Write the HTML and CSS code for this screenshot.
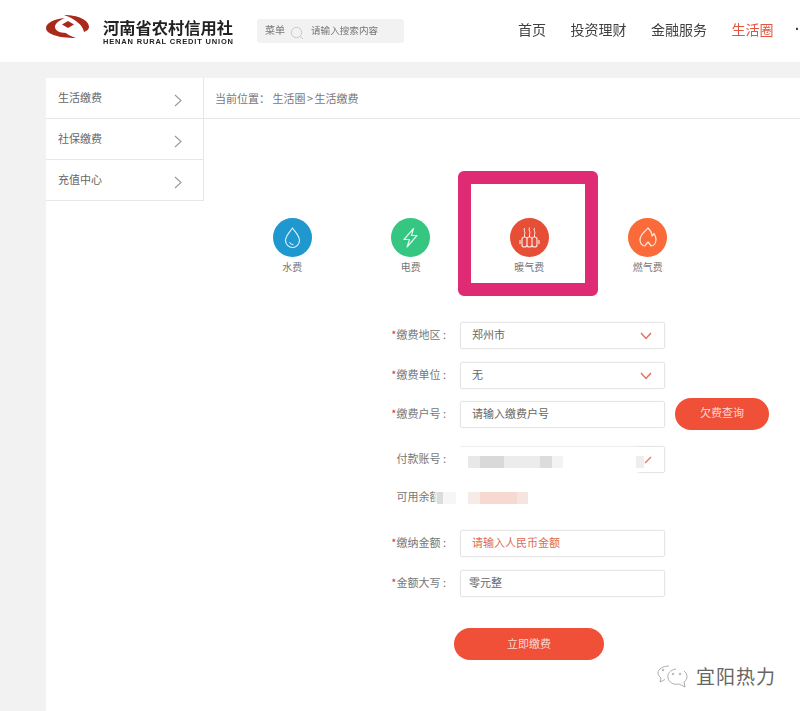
FILE: index.html
```html
<!DOCTYPE html>
<html lang="zh-CN">
<head>
<meta charset="utf-8">
<title>生活缴费</title>
<link rel="stylesheet" href="styles.css">
</head>
<body>
<div class="page">
  <header class="top">
    <div class="brand">
      <svg class="brand-mark" viewBox="0 0 43 24" aria-hidden="true">
        <path d="M19 3C8 4 0 8 0 13C0 19 12 23 30 23C24 21 21 19 20 18C13 18 9 15 9 12C9 8 14 5 19 3Z"/>
        <path d="M18 0C32 0 43 5 43 12C43 14 41 16 38 17C37 10 29 4 18 0Z"/>
        <path d="M22 6L28 9.500L22 13L16 9.500Z"/>
      </svg>
      <div class="brand-text">
        <div class="brand-cn">河南省农村信用社</div>
        <div class="brand-en">HENAN RURAL CREDIT UNION</div>
      </div>
    </div>
    <div class="search">
      <span>菜单</span>
      <svg class="search-icon" viewBox="0 0 14 14" aria-hidden="true"><circle cx="6.500" cy="6.500" r="5.200"/><path d="M10.500 10.500L13 13"/></svg>
      <span class="search-hint">请输入搜索内容</span>
    </div>
    <nav class="nav">
      <a>首页</a>
      <a>投资理财</a>
      <a>金融服务</a>
      <a class="on">生活圈</a>
      <a class="more">·</a>
    </nav>
  </header>

  <main class="shell">
    <aside class="side">
      <div class="side-item"><span>生活缴费</span><svg class="side-arrow" viewBox="0 0 8 13"><path d="M1 1L7 6.500L1 12"/></svg></div>
      <div class="side-item"><span>社保缴费</span><svg class="side-arrow" viewBox="0 0 8 13"><path d="M1 1L7 6.500L1 12"/></svg></div>
      <div class="side-item"><span>充值中心</span><svg class="side-arrow" viewBox="0 0 8 13"><path d="M1 1L7 6.500L1 12"/></svg></div>
    </aside>

    <section class="content">
      <div class="crumb"><span>当前位置：&nbsp;生活圈<span class="sep">&gt;</span>生活缴费</span></div>

      <div class="kinds">
        <div class="kind">
          <svg class="kind-icon" viewBox="0 0 39 39"><circle class="c-water" cx="19.500" cy="19.500" r="19.500"/><path class="line" d="M19.500 10C16.500 14.500 12.500 18 12.500 22.500A7 7 0 0 0 26.500 22.500C26.500 18 22.500 14.500 19.500 10Z"/><path class="line thin" d="M16.500 24A3.500 3.500 0 0 0 20.500 26.500"/></svg>
          <span>水费</span>
        </div>
        <div class="kind">
          <svg class="kind-icon" viewBox="0 0 39 39"><circle class="c-power" cx="19.500" cy="19.500" r="19.500"/><path class="line" d="M22.500 10.500L13 21.500H18.500L16 29L26 17.500H20.500Z"/></svg>
          <span>电费</span>
        </div>
        <div class="kind">
          <svg class="kind-icon" viewBox="0 0 39 39"><circle class="c-heat" cx="19.500" cy="19.500" r="19.500"/><path class="line thin" d="M14.500 10C13 12.500 16 14 14.500 16.500V19M19.500 9.500C18 12 21 14 19.500 16.500V19M24.500 10C23 12.500 26 14 24.500 16.500V19"/><path class="line" d="M12 21Q12 19 14.500 19Q17 19 17 21V27Q17 29 14.500 29Q12 29 12 27ZM17 21Q17 19 19.500 19Q22 19 22 21V27Q22 29 19.500 29Q17 29 17 27ZM22 21Q22 19 24.500 19Q27 19 27 21V27Q27 29 24.500 29Q22 29 22 27ZM10 22V26M29 22V26"/></svg>
          <span>暖气费</span>
        </div>
        <div class="kind">
          <svg class="kind-icon" viewBox="0 0 39 39"><circle class="c-gas" cx="19.500" cy="19.500" r="19.500"/><path class="line" d="M20 10C18 13 12 16 12 22C12 25 14 28 17 28C18 26 19 25 20 24C21 25 22 26 23 28C26 28 28 25 28 21C28 19 27 17 26 15.500C25.500 17 25 17.500 24 18C24 15 22 12 20 10Z"/></svg>
          <span>燃气费</span>
        </div>
      </div>

      <form class="form">
        <div class="row r1">
          <label class="lab"><i>*</i>缴费地区 :</label>
          <div class="field"><span>郑州市</span><svg class="chev" viewBox="0 0 12 8"><path d="M1 1L6 6.500L11 1"/></svg></div>
        </div>
        <div class="row r2">
          <label class="lab"><i>*</i>缴费单位 :</label>
          <div class="field"><span>无</span><svg class="chev" viewBox="0 0 12 8"><path d="M1 1L6 6.500L11 1"/></svg></div>
        </div>
        <div class="row r3">
          <label class="lab"><i>*</i>缴费户号 :</label>
          <div class="field"><span>请输入缴费户号</span></div>
          <button type="button" class="btn btn-query"><span>欠费查询</span></button>
        </div>
        <div class="row r4">
          <label class="lab">付款账号 :</label>
          <div class="field"><svg class="tick" viewBox="0 0 8 8"><path d="M1 7L7 1"/></svg></div>
        </div>
        <div class="row r5">
          <label class="lab">可用余额 :</label>
        </div>
        <div class="row r6">
          <label class="lab"><i>*</i>缴纳金额 :</label>
          <div class="field hint"><span>请输入人民币金额</span></div>
        </div>
        <div class="row r7">
          <label class="lab"><i>*</i>金额大写 :</label>
          <div class="field tight"><span>零元整</span></div>
        </div>
        <div class="submit"><button type="button" class="btn btn-pay"><span>立即缴费</span></button></div>
      </form>

      <div class="focus-box"></div>

      <div class="mask mask-account">
        <b class="m1"></b><b class="m2"></b><b class="m3"></b><b class="m4"></b><b class="m5"></b>
      </div>
      <div class="mosaic-end"></div>
      <div class="mask mask-balance">
        <b class="g1"></b><b class="g2"></b><b class="g3"></b><b class="g4"></b><b class="g5"></b>
      </div>
    </section>
  </main>

  <div class="mark">
    <svg class="mark-icon" viewBox="0 0 34 24" aria-hidden="true">
      <path d="M13 2C7 2 2 5 2 9C2 11 3.500 13 5 14L4 18L9 15.500"/>
      <path d="M20 5C14 6 11 10 12 14C13 19 18 21 23 20L29 23L28 18C32 15 32 10 28 7"/>
      <circle cx="7" cy="6" r=".8"/><circle cx="17" cy="10" r=".8"/><circle cx="24" cy="10" r=".8"/>
    </svg>
    <span>宜阳热力</span>
  </div>
</div>
</body>
</html>
```

FILE: styles.css
```css
* { box-sizing: border-box; }
html, body { margin: 0; height: 100%; overflow: hidden; background: #f2f2f2; }
body { font-family: "Noto Sans CJK SC", "Liberation Sans", sans-serif; font-size: 11px; color: #6a6a6a; }
.page { position: relative; width: 800px; height: 711px; overflow: hidden; filter: blur(.45px); }

/* header */
.top { height: 62px; background: #fff; display: flex; align-items: flex-start; position: relative; }
.brand { display: flex; margin-left: 46px; padding-top: 15px; width: 211px; flex: none; }
.brand-mark { width: 43px; height: 24px; fill: #a9291c; flex: none; }
.brand-text { margin-left: 14px; margin-top: 3px; color: #222; }
.brand-cn { font-size: 16.250px; line-height: 18px; font-weight: 700; white-space: nowrap; }
.brand-en { font-family: "Liberation Sans", sans-serif; font-size: 7.500px; line-height: 8px; margin-top: 2px; font-weight: 700; letter-spacing: .82px; white-space: nowrap; }
.search { margin-top: 19px; width: 147px; height: 24px; background: #f2f2f2; border-radius: 3px; display: flex; align-items: center; padding-left: 8px; font-size: 10px; color: #777; flex: none; }
.search span { margin-bottom: 3px; }
.search-icon { width: 14px; height: 14px; margin-left: 5px; fill: none; stroke: #c8c8c8; stroke-width: 1; margin-top: 3px; }
.search-hint { margin-left: 7px; font-size: 9.600px; }
.nav { display: flex; gap: 24.500px; margin-left: 114px; padding-top: 19px; font-size: 14px; line-height: 21px; color: #3f3f3f; white-space: nowrap; flex: none; }
.nav .on { color: #e2573f; }
.nav .more { font-family: "Liberation Sans", sans-serif; font-weight: 700; margin-left: -3px; }

/* shell */
.shell { display: flex; margin: 16px 0 0 46px; background: #fff; height: 633px; }
.side { width: 158px; flex: none; }
.side-item { height: 41px; display: flex; align-items: center; justify-content: space-between; padding: 0 21px 0 12px; border-bottom: 1px solid #e6e6e6; border-right: 1px solid #e6e6e6; color: #666; }
.side-item span { margin-bottom: 2px; }
.side-arrow { width: 8px; height: 13px; fill: none; stroke: #999; stroke-width: 1.100; margin-top: 5px; }
.content { flex: 1; position: relative; }
.crumb { height: 41px; line-height: 40px; padding-left: 11px; border-bottom: 1px solid #e6e6e6; color: #777; }
.sep { margin: 0 1.500px; }

/* kinds */
.kinds { display: flex; margin-top: 99px; margin-left: 29px; height: 64px; }
.kind { width: 118.500px; display: flex; flex-direction: column; align-items: center; font-size: 10px; line-height: 14px; color: #777; }
.kind-icon { width: 39px; height: 39px; margin-bottom: 3px; }
.c-water { fill: #1f97cf; }
.c-power { fill: #35c682; }
.c-heat { fill: #e64e35; }
.c-gas { fill: #fb6a39; }
.line { fill: none; stroke: #fff; stroke-width: 1.200; stroke-linejoin: round; opacity: .85; }
.thin { stroke-width: 1; }
.focus-box { position: absolute; left: 254px; top: 93px; width: 140px; height: 125px; border: 13px solid #de2b73; border-radius: 6px; }

/* form */
.form { margin-top: 40px; }
.row { display: flex; align-items: center; height: 27px; gap: 10px; }
.r2 { margin-top: 13px; }
.r3 { margin-top: 12px; }
.r4 { margin-top: 18px; }
.r5 { margin-top: 11px; }
.r6 { margin-top: 19px; }
.r7 { margin-top: 13px; }
.lab { width: 246px; flex: none; text-align: right; color: #777; white-space: nowrap; padding-right: 4px; margin-bottom: 4px; }
.lab i { color: #d8382a; font-style: normal; }
.field { width: 205px; height: 27px; flex: none; border: 1px solid #e5e5e5; border-radius: 2px; display: flex; align-items: center; justify-content: space-between; padding: 0 12px 0 11px; color: #666; box-shadow: 0 0 2px rgba(0,0,0,.06); }
.field span { margin-bottom: 3px; }
.tight { padding-left: 8px; }
.hint { color: #df6a52; }
.chev { width: 12px; height: 8px; fill: none; stroke: #e8705a; stroke-width: 1.500; }
.tick { width: 8px; height: 8px; fill: none; stroke: #e8705a; stroke-width: 1.300; margin-left: auto; }
.btn { border: 0; background: #ef5037; color: #fbd9d0; font: inherit; cursor: pointer; }
.btn span { display: block; margin-bottom: 3px; }
.btn-query { width: 94px; height: 32px; border-radius: 16px; flex: none; margin-bottom: 2px; }
.submit { margin-top: 31px; padding-left: 250px; }
.btn-pay { width: 150px; height: 32px; border-radius: 16px; display: block; }

/* masked account data */
.mask { position: absolute; display: flex; background: #fff; }
.mask-account { left: 256px; top: 371px; width: 176px; height: 26px; padding: 7px 0 7px 8px; box-shadow: 0 0 4px 2px #fff; }
.mask-balance { left: 233px; top: 413px; width: 200px; height: 16px; padding-top: 1px; box-shadow: 0 0 4px 2px #fff; }
.mask b { display: block; height: 12px; }
.m1 { width: 12px; background: #e8e8e8; }
.m2 { width: 24px; background: #d9d9d9; }
.m3 { width: 36px; background: #ececec; }
.m4 { width: 12px; background: #dcdcdc; }
.m5 { width: 11px; background: #f3f3f3; }
.g1 { width: 6px; background: #dcdcdc; }
.g2 { width: 13px; background: #f6f6f6; margin-right: 12px; }
.g3 { width: 12px; background: #f6ebe6; }
.g4 { width: 37px; background: #f6d9d0; }
.g5 { width: 11px; background: #f6e4de; }
.mosaic-end { position: absolute; left: 432px; top: 378px; width: 8px; height: 12px; background: #f3ecec; }

/* watermark */
.mark { position: absolute; left: 656px; top: 663px; display: flex; align-items: center; gap: 6px; font-size: 19px; line-height: 26px; letter-spacing: 1px; color: #666; white-space: nowrap; }
.mark-icon { width: 34px; height: 24px; fill: none; stroke: #999; stroke-width: .8; }
```
